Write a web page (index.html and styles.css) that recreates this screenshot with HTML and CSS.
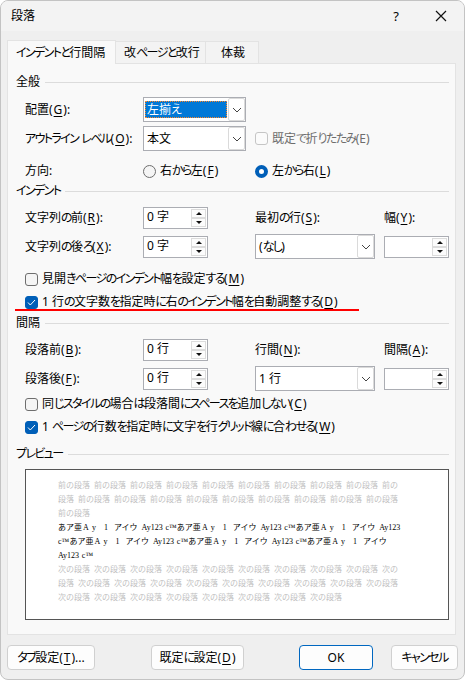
FILE: index.html
```html
<!DOCTYPE html>
<html lang="ja">
<head>
    <meta charset="UTF-8">
    <meta name="viewport" content="width=device-width, initial-scale=1.0">
    <title>段落</title>
    <link rel="stylesheet" href="styles.css">
</head>
<body>
    <div class="dialog">
        <header class="titlebar">
            <span class="title">段落</span>
            <span class="help">?</span>
            <svg class="close" width="12" height="12" viewBox="0 0 12 12"><path d="M1 1l10 10M11 1L1 11"/></svg>
        </header>

        <nav class="tabs">
            <div class="tab active"><span class="kana">インデントと</span>行間隔</div>
            <div class="tab tab-page">改<span class="kana">ページと</span>改行</div>
            <div class="tab tab-style">体裁</div>
        </nav>

        <main class="panel">
            <h2 class="heading">全般</h2>
            <div class="row row-align">
                <span class="label">配置(<u>G</u>):</span>
                <div class="combo"><span class="value selected">左揃<span class="kana">え</span></span><span class="arrow"><svg width="10" height="6" viewBox="0 0 10 6"><path d="M1 1l4 4 4-4"/></svg></span></div>
            </div>
            <div class="row row-outline">
                <span class="label"><span class="kana">アウトライン</span> <span class="kana">レベル</span>(<u>O</u>):</span>
                <div class="combo"><span class="value">本文</span><span class="arrow"><svg width="10" height="6" viewBox="0 0 10 6"><path d="M1 1l4 4 4-4"/></svg></span></div>
                <span class="option disabled"><span class="check"></span>既定<span class="kana">で</span>折<span class="kana">りたたみ</span>(E)</span>
            </div>
            <div class="row row-direction">
                <span class="label">方向:</span>
                <span class="option"><span class="radio"></span>右<span class="kana">から</span>左(<u>F</u>)</span>
                <span class="option"><span class="radio on"></span>左<span class="kana">から</span>右(<u>L</u>)</span>
            </div>

            <h2 class="heading heading-indent"><span class="kana">インデント</span></h2>
            <div class="row row-before">
                <span class="label">文字列<span class="kana">の</span>前(<u>R</u>):</span>
                <div class="spinner"><span class="value">0 字</span><span class="steps"><i class="up"></i><i class="down"></i></span></div>
                <span class="label">最初<span class="kana">の</span>行(<u>S</u>):</span>
                <span class="label">幅(<u>Y</u>):</span>
            </div>
            <div class="row row-after">
                <span class="label">文字列<span class="kana">の</span>後<span class="kana">ろ</span>(<u>X</u>):</span>
                <div class="spinner"><span class="value">0 字</span><span class="steps"><i class="up"></i><i class="down"></i></span></div>
                <div class="combo"><span class="value">(<span class="kana">なし</span>)</span><span class="arrow"><svg width="10" height="6" viewBox="0 0 10 6"><path d="M1 1l4 4 4-4"/></svg></span></div>
                <div class="spinner"><span class="value"></span><span class="steps"><i class="up"></i><i class="down"></i></span></div>
            </div>
            <div class="checkrow checkrow-mirror">
                <span class="check"></span><span>見開<span class="kana">きページのインデント</span>幅<span class="kana">を</span>設定<span class="kana">する</span>(<u>M</u>)</span>
            </div>
            <div class="checkrow checkrow-adjust">
                <span class="check on"><svg width="9" height="7" viewBox="0 0 9 7"><path d="M1 3.5L3.3 6 8 1"/></svg></span><span>1 行<span class="kana">の</span>文字数<span class="kana">を</span>指定時<span class="kana">に</span>右<span class="kana">のインデント</span>幅<span class="kana">を</span>自動調整<span class="kana">する</span>(<u>D</u>)</span>
            </div>
            <div class="marker"></div>

            <h2 class="heading heading-spacing">間隔</h2>
            <div class="row row-before">
                <span class="label">段落前(<u>B</u>):</span>
                <div class="spinner"><span class="value">0 行</span><span class="steps"><i class="up"></i><i class="down"></i></span></div>
                <span class="label">行間(<u>N</u>):</span>
                <span class="label">間隔(<u>A</u>):</span>
            </div>
            <div class="row row-after">
                <span class="label">段落後(<u>F</u>):</span>
                <div class="spinner"><span class="value">0 行</span><span class="steps"><i class="up"></i><i class="down"></i></span></div>
                <div class="combo"><span class="value">1 行</span><span class="arrow"><svg width="10" height="6" viewBox="0 0 10 6"><path d="M1 1l4 4 4-4"/></svg></span></div>
                <div class="spinner"><span class="value"></span><span class="steps"><i class="up"></i><i class="down"></i></span></div>
            </div>
            <div class="checkrow checkrow-same">
                <span class="check"></span><span>同<span class="kana">じスタイルの</span>場合<span class="kana">は</span>段落間<span class="kana">にスペースを</span>追加<span class="kana">しない</span>(<u>C</u>)</span>
            </div>
            <div class="checkrow checkrow-grid">
                <span class="check on"><svg width="9" height="7" viewBox="0 0 9 7"><path d="M1 3.5L3.3 6 8 1"/></svg></span><span>1 <span class="kana">ページの</span>行数<span class="kana">を</span>指定時<span class="kana">に</span>文字<span class="kana">を</span>行<span class="kana">グリッド</span>線<span class="kana">に</span>合<span class="kana">わせる</span>(<u>W</u>)</span>
            </div>

            <h2 class="heading heading-preview"><span class="kana">プレビュー</span></h2>
            <div class="preview">
                <p class="faded">前の段落 前の段落 前の段落 前の段落 前の段落 前の段落 前の段落 前の段落 前の段落 前の<br>段落 前の段落 前の段落 前の段落 前の段落 前の段落 前の段落 前の段落 前の段落 前の段落<br>前の段落</p>
                <p>あア亜<b>A</b><b>y</b>&ensp;<b>1</b>&ensp;アイウ&ensp;Ay123 c™あア亜<b>A</b><b>y</b>&ensp;<b>1</b>&ensp;アイウ&ensp;Ay123 c™あア亜<b>A</b><b>y</b>&ensp;<b>1</b>&ensp;アイウ&ensp;Ay123<br>c™あア亜<b>A</b><b>y</b>&ensp;<b>1</b>&ensp;アイウ&ensp;Ay123 c™あア亜<b>A</b><b>y</b>&ensp;<b>1</b>&ensp;アイウ&ensp;Ay123 c™あア亜<b>A</b><b>y</b>&ensp;<b>1</b>&ensp;アイウ<br>Ay123 c™</p>
                <p class="faded">次の段落 次の段落 次の段落 次の段落 次の段落 次の段落 次の段落 次の段落 次の段落 次の<br>段落 次の段落 次の段落 次の段落 次の段落 次の段落 次の段落 次の段落 次の段落 次の段落<br>次の段落 次の段落 次の段落 次の段落 次の段落 次の段落 次の段落 次の段落</p>
            </div>
        </main>

        <footer class="buttons">
            <button type="button" class="btn btn-tab"><span class="kana">タブ</span>設定(<u>T</u>)...</button>
            <button type="button" class="btn btn-default">既定<span class="kana">に</span>設定(<u>D</u>)</button>
            <button type="button" class="btn btn-ok">OK</button>
            <button type="button" class="btn btn-cancel"><span class="kana">キャンセル</span></button>
        </footer>
    </div>
</body>
</html>
```
FILE: styles.css
```css
* {
    box-sizing: border-box;
}
body {
    margin: 0;
    background-color: #fff;
    color: #000;
    font-family: "Noto Sans", "Noto Sans CJK JP", sans-serif;
    font-size: 12px;
    line-height: 16px;
    white-space: nowrap;
}
.dialog {
    display: flex;
    flex-direction: column;
    width: 465px;
    height: 680px;
    border: 1px solid #c3c3c3;
    border-radius: 8px;
    background-color: #efefef;
    overflow: hidden;
}
.kana {
    font-feature-settings: "palt";
    letter-spacing: -1.6px;
}
u {
    margin: 0 1px;
    text-underline-offset: 2px;
    text-decoration-skip-ink: none;
}

/* title bar */
.titlebar {
    display: flex;
    align-items: center;
    height: 30px;
    padding: 0 17px 0 10px;
    background-color: #f3f3f3;
}
.title {
    flex: 1;
}
.help {
    margin-right: 36px;
    font-size: 13px;
}
svg {
    display: block;
    fill: none;
    stroke: #444;
}
.close {
    stroke: #111;
    stroke-width: 1.2;
}

/* tabs */
.tabs {
    display: flex;
    align-items: flex-end;
    height: 32px;
    padding-left: 6px;
}
.tab {
    height: 22px;
    padding: 3px 0 0 8px;
    border: 1px solid #e3e3e3;
    border-bottom: none;
    border-left: none;
    background-color: #f3f3f3;
}
.tab.active {
    z-index: 1;
    width: 109px;
    height: 24px;
    margin-bottom: -1px;
    padding-top: 4px;
    border-left: 1px solid #e3e3e3;
    background-color: #f9f9f9;
}
.tab-page {
    width: 90px;
}
.tab-style {
    width: 53px;
    padding-left: 15px;
}

/* panel */
.panel {
    width: 449px;
    height: 572px;
    margin-left: 6px;
    padding: 10px 6px 0 8px;
    border: 1px solid #e3e3e3;
    background-color: #f9f9f9;
}
.heading {
    display: flex;
    align-items: center;
    gap: 5px;
    height: 16px;
    margin: 0;
    font-size: 12px;
    font-weight: normal;
}
.heading::after {
    content: "";
    flex: 1;
    height: 1px;
    background-color: #dcdcdc;
}
.row {
    display: grid;
    align-items: center;
    margin-left: 9px;
    grid-template-columns: 118px 112px 129px 65px;
}
.row-align {
    height: 25px;
    margin-top: 7px;
}
.row-outline {
    height: 25px;
    margin-top: 4px;
}
.row-direction {
    height: 16px;
    margin-top: 12px;
}
.row-before {
    height: 22px;
    margin-top: 8px;
}
.row-after {
    height: 25px;
    margin-top: 5px;
}
.heading-indent {
    margin-top: 4px;
}
.heading-spacing {
    margin-top: 4px;
}
.heading-preview {
    margin-top: 11px;
}

/* fields */
.combo, .spinner {
    display: flex;
    border: 1px solid #abadb3;
    background-color: #fff;
}
.combo {
    width: 103px;
    height: 25px;
}
.row-after .combo {
    width: 120px;
}
.combo .value {
    flex: 1;
    margin: 3px 1px;
    padding: 0 2px;
    line-height: 17px;
}
.combo .selected {
    background-color: #0078d7;
    color: #fff;
    outline: 1px dotted #ff8728;
    outline-offset: -1px;
}
.arrow {
    display: flex;
    align-items: center;
    justify-content: center;
    width: 17px;
    border: 1px solid #dadada;
    border-radius: 2px;
}
.spinner {
    width: 65px;
    height: 22px;
}
.spinner .value {
    flex: 1;
    padding: 1px 0 0 3px;
}
.steps {
    display: flex;
    flex-direction: column;
    width: 16px;
    padding: 1px 1px 1px 0;
}
.steps i {
    display: flex;
    align-items: center;
    justify-content: center;
    flex: 1;
    border: 1px solid #dcdcdc;
    background-color: #fcfcfc;
}
.steps i::after {
    content: "";
    border: 3px solid transparent;
}
.steps .up::after {
    margin-top: -3px;
    border-bottom-color: #111;
}
.steps .down::after {
    margin-bottom: -3px;
    border-top-color: #111;
}

/* check boxes and radio buttons */
.option {
    display: flex;
    align-items: center;
}
.check, .radio {
    display: flex;
    align-items: center;
    justify-content: center;
    width: 13px;
    height: 13px;
    margin-right: 4px;
    border: 1px solid #6e6e6e;
    border-radius: 3px;
    background-color: #f5f5f5;
}
.check.on {
    border-color: #005fb8;
    background-color: #005fb8;
}
.check svg {
    stroke: #fff;
}
.radio {
    border-radius: 50%;
}
.radio.on {
    border: 4px solid #005fb8;
    background-color: #fff;
}
.disabled {
    color: #6d6d6d;
}
.disabled .check {
    border-color: #c5c5c5;
    background-color: #fbfbfb;
}
.checkrow {
    display: flex;
    align-items: center;
    height: 16px;
    margin-left: 9px;
}
.checkrow-mirror {
    margin-top: 12px;
}
.checkrow-adjust {
    margin-top: 7px;
}
.checkrow-same {
    margin-top: 5px;
}
.checkrow-grid {
    margin-top: 7px;
}
.marker {
    width: 344px;
    height: 2px;
    margin: -1px 0 0 -1px;
    background-color: #f00;
}

/* preview */
.preview {
    height: 151px;
    margin: 7px 0 0 9px;
    padding: 9px 0 0 32px;
    border: 1px solid #555;
    background-color: #fff;
    font-family: "Liberation Serif", "Noto Sans CJK JP", serif;
    font-size: 8px;
    line-height: 14px;
}
.preview p {
    margin: 0;
    word-spacing: 0.8px;
}
.preview b {
    display: inline-block;
    width: 8px;
    font-weight: normal;
    text-align: center;
}
.preview .faded {
    color: #bfbfbf;
    word-spacing: 2px;
}

/* buttons */
.buttons {
    display: flex;
    margin: 10px 0 0 6px;
}
.btn {
    height: 25px;
    padding: 0;
    border: 1px solid #d0d0d0;
    border-radius: 4px;
    background-color: #fdfdfd;
    color: #000;
    font: inherit;
}
.btn-tab {
    width: 88px;
    margin-right: 56px;
}
.btn-default {
    width: 93px;
    margin-right: 55px;
}
.btn-ok {
    width: 74px;
    margin-right: 17px;
    border-color: #0067c0;
}
.btn-cancel {
    width: 67px;
    margin-left: 1px;
}
```
